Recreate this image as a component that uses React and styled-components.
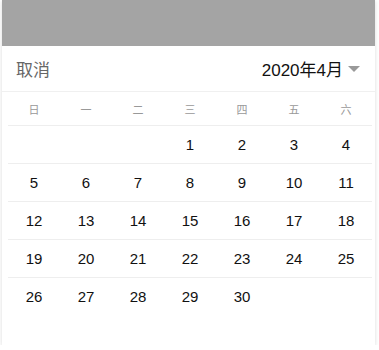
import styled, { createGlobalStyle } from "styled-components";

const GlobalStyle = createGlobalStyle`
    body{
        margin: 0;
        background: #fff;
        font-family: "Liberation Sans", "Noto Sans CJK SC", sans-serif;
    }
`

const weekdays = ["日", "一", "二", "三", "四", "五", "六"];

function buildWeeks(){
    const cells = [null, null, null];
    for(let d = 1; d <= 30; d++) cells.push(d);
    while(cells.length % 7) cells.push(null);
    const weeks = [];
    for(let i = 0; i < cells.length; i += 7) weeks.push(cells.slice(i, i + 7));
    return weeks;
}

export default function App(){
    const weeks = buildWeeks();
    return(
    <>
        <GlobalStyle />
        <Card>
            <Mask />
            <Header>
                <Cancel>取消</Cancel>
                <Title>
                    2020年4月
                    <Caret />
                </Title>
            </Header>
            <Grid>
                <Row>
                    {weekdays.map((w)=> <WeekDay key={w}>{w}</WeekDay>)}
                </Row>
                {weeks.map((week, i)=>
                    <Row key={i} days>
                        {week.map((d, j)=> <Day key={j}>{d || ""}</Day>)}
                    </Row>
                )}
            </Grid>
        </Card>
    </>
    )
}

const Card = styled.div`
    width: 373px;
    height: 345px;
    margin-left: 2px;
    background: #fff;
    box-shadow: 0 1px 4px rgba(0,0,0,0.15);
    display: flex;
    flex-direction: column;
`

const Mask = styled.div`
    height: 46px;
    background: #a4a4a4;
`

const Header = styled.div`
    height: 45px;
    display: flex;
    align-items: center;
    justify-content: space-between;
    padding: 0 15px 0 14px;
    border-bottom: 1px solid #f0f0f0;
`

const Cancel = styled.span`
    font-size: 17px;
    color: #666;
`

const Title = styled.span`
    display: flex;
    align-items: center;
    font-size: 17px;
    color: #111;
`

const Caret = styled.span`
    margin-left: 5px;
    width: 0;
    height: 0;
    border-left: 6px solid transparent;
    border-right: 6px solid transparent;
    border-top: 6px solid #999;
`

const Grid = styled.div`
    padding: 0 3px 0 6px;
`

const Row = styled.div`
    display: grid;
    grid-template-columns: repeat(7, 1fr);
    height: ${props=> props.days ? "37px" : "33px"};
    border-bottom: 1px solid #eee;
    &:last-child{
        border-bottom: none;
    }
`

const WeekDay = styled.div`
    display: flex;
    align-items: center;
    justify-content: center;
    font-size: 11px;
    color: #999;
`

const Day = styled.div`
    display: flex;
    align-items: center;
    justify-content: center;
    font-size: 15px;
    color: #111;
`
